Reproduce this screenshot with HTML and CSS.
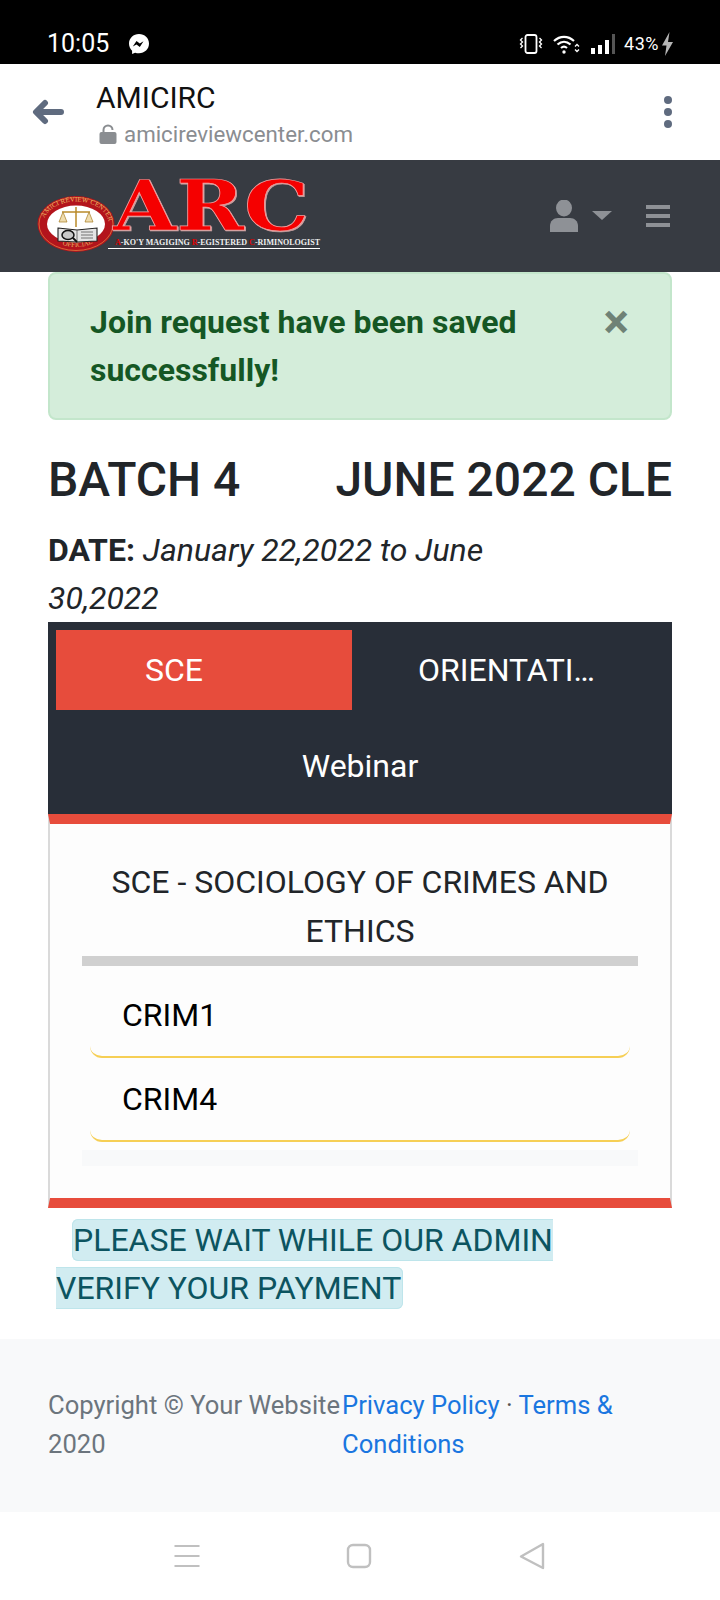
FILE: index.html
```html
<!DOCTYPE html>
<html lang="en">
<head>
  <meta charset="UTF-8" />
  <meta name="viewport" content="width=device-width, initial-scale=1" />
  <title>AMICIRC</title>
  <link rel="stylesheet" href="styles.css">
</head>
<body>
  <div class="status-bar">
    <div class="status-left">
      <span class="status-time">10:05</span>
      <svg class="status-messenger" viewBox="0 0 20 20" width="20" height="20">
        <path fill="#fff" d="M10 0C4.400 0 0 4.100 0 9.600c0 2.900 1.200 5.400 3.100 7.100V20l3-1.300c1.200.4 2.500.6 3.900.6 5.600 0 10-4.100 10-9.700S15.600 0 10 0z"/>
        <path fill="#000" d="M3.800 12.500l3.700-5.500 3.300 2.500 3.700-2.200-3.700 5.600-3.300-2.500z"/>
      </svg>
    </div>
    <div class="status-right">
      <svg viewBox="0 0 24 20" width="24" height="20" fill="none" stroke="#fff" stroke-width="1.800">
        <rect x="6.500" y="1" width="11" height="18" rx="2"/>
        <path d="M3.500 4l-2 2 2 2-2 2 2 2-2 2M20.500 4l2 2-2 2 2 2-2 2 2 2" stroke-width="1.300"/>
      </svg>
      <svg viewBox="0 0 27 20" width="27" height="20" fill="none" stroke="#fff" stroke-width="2.200">
        <path d="M1 7c6-5.500 14-5.500 20 0M4.500 10.500c4-3.500 9-3.500 13 0M8 14c2-1.700 4-1.700 6 0"/>
        <circle cx="11" cy="18" r="1.700" fill="#fff" stroke="none"/>
        <path d="M22 12.500l2-2 2 2M22 15.500l2 2 2-2" stroke-width="1.300"/>
      </svg>
      <svg viewBox="0 0 26 20" width="26" height="20">
        <rect x="1" y="14" width="4" height="6" fill="#fff"/>
        <rect x="8" y="11" width="4" height="9" fill="#fff"/>
        <rect x="15" y="6" width="4" height="14" fill="#fff"/>
        <rect x="22" y="0" width="3" height="20" fill="#555"/>
      </svg>
      <span class="status-battery">43%</span>
      <svg viewBox="0 0 13 24" width="13" height="24">
        <path fill="#b5b5b5" d="M8.500 0L1 13.500h4.500L4 24l8-14H7z"/>
      </svg>
    </div>
  </div>

  <div class="browser-bar">
    <svg class="browser-back" viewBox="0 0 32 26" width="32" height="26">
      <path fill="none" stroke="#5f6b7f" stroke-width="6" stroke-linecap="round" stroke-linejoin="round" d="M29 13H5M13 4l-9 9 9 9"/>
    </svg>
    <div class="browser-title">
      <div class="browser-name">AMICIRC</div>
      <div class="browser-url">
        <svg viewBox="0 0 18 20" width="18" height="20">
          <path fill="none" stroke="#8a8d91" stroke-width="2" d="M4.500 9V6a4.500 4.500 0 0 1 9 0"/>
          <rect x="0.500" y="8" width="17" height="12" rx="2" fill="#8a8d91"/>
        </svg>
        <span>amicireviewcenter.com</span>
      </div>
    </div>
    <div class="browser-menu"><i></i><i></i><i></i></div>
  </div>

  <nav class="navbar">
    <svg class="logo" viewBox="0 0 290 88" width="290" height="88">
      <defs>
        <path id="sealTop" d="M7 53a33 23.500 0 0 1 66 0"/>
        <path id="sealBottom" d="M14 64a30 22 0 0 0 52 0"/>
      </defs>
      <ellipse cx="40" cy="52" rx="38.500" ry="28" fill="#b3141c"/>
      <ellipse cx="40" cy="52" rx="37" ry="26.500" fill="none" stroke="#e07a40" stroke-width="0.800"/>
      <text class="seal-text"><textPath href="#sealTop" startOffset="8%">AMICI REVIEW CENTER</textPath></text>
      <text class="seal-text"><textPath href="#sealBottom" startOffset="26%">OFFICIAL</textPath></text>
      <ellipse cx="40" cy="52" rx="29" ry="18.500" fill="#fff"/>
      <path d="M40 35v20M26 40h28" stroke="#b98a2a" stroke-width="1.500" fill="none"/>
      <path d="M23 50l4-10 4 10zM49 50l4-10 4 10z" fill="#efdcae" stroke="#a67c22" stroke-width="0.700"/>
      <path d="M22 56l19 2 20-2v13l-20 1-19-1z" fill="#e4e4e4" stroke="#222" stroke-width="1.100"/>
      <path d="M41 58v12M45 60h12M45 63h12M45 66h12" stroke="#555" stroke-width="0.800" fill="none"/>
      <ellipse cx="32" cy="63" rx="6" ry="4.500" fill="#c8c8c8" stroke="#111" stroke-width="1.500"/>
      <path d="M37 66l4 4" stroke="#111" stroke-width="1.800"/>
      <text class="logo-arc" x="77" y="58" textLength="196" lengthAdjust="spacingAndGlyphs">ARC</text>
      <text class="logo-sub" x="79" y="73" textLength="205" lengthAdjust="spacingAndGlyphs"><tspan fill="#e00000">A</tspan>-KO'Y MAGIGING <tspan fill="#e00000">R</tspan>-EGISTERED <tspan fill="#e00000">C</tspan>-RIMINOLOGIST</text>
      <rect x="72" y="76" width="212" height="1" fill="#fff"/>
    </svg>
    <div class="nav-actions">
      <svg viewBox="0 0 28 32" width="28" height="32">
        <ellipse cx="14" cy="8" rx="8" ry="8.500" fill="#8e9196"/>
        <path fill="#8e9196" d="M0 32v-6c0-5 3.500-8 8-8h12c4.500 0 8 3 8 8v6z"/>
      </svg>
      <span class="nav-caret"></span>
      <div class="nav-toggler"><i></i><i></i><i></i></div>
    </div>
  </nav>

  <main class="content">
    <div class="alert-success">
      <span>Join request have been saved successfully!</span>
      <span class="alert-close">×</span>
    </div>

    <div class="batch-head">
      <h1>BATCH 4</h1>
      <h1>JUNE 2022 CLE</h1>
    </div>
    <p class="batch-date"><b>DATE:</b> <em>January 22,2022 to June 30,2022</em></p>

    <div class="tabs">
      <a class="tab tab-active">SCE</a>
      <a class="tab tab-second">ORIENTATION</a>
      <a class="tab tab-wide">Webinar</a>
    </div>

    <div class="panel">
      <div class="panel-title">SCE - SOCIOLOGY OF CRIMES AND ETHICS</div>
      <div class="panel-rule"></div>
      <div class="subject-list">
        <div class="subject">CRIM1</div>
        <div class="subject">CRIM4</div>
      </div>
      <div class="panel-foot"></div>
    </div>

    <p class="notice"><span>PLEASE WAIT WHILE OUR ADMIN VERIFY YOUR PAYMENT</span></p>
  </main>

  <footer class="footer">
    <div class="footer-copy">Copyright © Your Website 2020</div>
    <div class="footer-links"><a>Privacy Policy</a> · <a>Terms &amp; Conditions</a></div>
  </footer>

  <div class="system-nav">
    <svg viewBox="0 0 26 24" width="26" height="24" fill="none" stroke="#c0c0c0" stroke-width="2">
      <path d="M0.500 2h25M0.500 12h25M0.500 22h25"/>
    </svg>
    <svg viewBox="0 0 26 26" width="26" height="26" fill="none" stroke="#c0c0c0" stroke-width="2.400">
      <rect x="2" y="2" width="22" height="22" rx="5"/>
    </svg>
    <svg viewBox="0 0 28 28" width="28" height="28" fill="none" stroke="#c0c0c0" stroke-width="2.400" stroke-linejoin="round">
      <path d="M25 2v24L3 14.500z"/>
    </svg>
  </div>
</body>
</html>
```

FILE: styles.css
```css
body {
  margin: 0;
  font-family: 'Roboto', sans-serif;
  font-size: 32px;
  line-height: 1.5;
  color: #212529;
  background: #fff;
}

/* phone status bar */
.status-bar {
  height: 64px;
  background: #000;
  color: #fff;
  display: flex;
  justify-content: space-between;
  padding: 24px 46px 0 47px;
  box-sizing: border-box;
}

.status-left,
.status-right {
  display: flex;
  align-items: center;
  height: 40px;
}

.status-time {
  font-size: 25px;
  line-height: 40px;
}

.status-messenger {
  margin-left: 20px;
}

.status-right {
  gap: 10px;
}

.status-battery {
  font-size: 18px;
  line-height: 40px;
  letter-spacing: 0.5px;
  margin-left: -2px;
}

.status-right svg:last-child {
  margin-left: -8px;
}

/* browser bar */
.browser-bar {
  height: 96px;
  display: flex;
  align-items: center;
  padding: 0 48px 0 32px;
}

.browser-back {
  margin-right: 32px;
}

.browser-title {
  flex: 1;
  padding-top: 6px;
}

.browser-name {
  font-size: 30px;
  line-height: 36px;
  color: #111;
  margin-bottom: 1px;
}

.browser-url {
  display: flex;
  align-items: center;
  gap: 7px;
  margin-left: 3px;
  font-size: 22.3px;
  line-height: 34px;
  color: #8a8d91;
}

.browser-menu {
  display: flex;
  flex-direction: column;
  gap: 4px;
}

.browser-menu i {
  width: 8px;
  height: 8px;
  border-radius: 50%;
  background: #5f6b7f;
}

/* site navbar */
.navbar {
  height: 112px;
  background: #373b42;
  display: flex;
  justify-content: space-between;
  align-items: center;
  padding: 0 50px 0 36px;
}

.logo-arc {
  font-family: 'DejaVu Serif', serif;
  font-weight: 700;
  font-size: 69px;
  fill: #f50000;
  stroke: #f3a0a0;
  stroke-width: 0.7;
  filter: drop-shadow(1.5px 1px 0 #c9a0a0);
}

.logo-sub {
  font-family: 'Liberation Serif', serif;
  font-weight: 700;
  font-size: 8px;
  fill: #eee;
}

.seal-text {
  font-family: 'Liberation Serif', serif;
  font-size: 7px;
  fill: #e8b060;
}

.nav-actions {
  display: flex;
  align-items: center;
}

.nav-caret {
  width: 0;
  height: 0;
  margin: 0 34px 0 14px;
  border-left: 10px solid transparent;
  border-right: 10px solid transparent;
  border-top: 9px solid #8e9196;
  position: relative;
  top: -1px;
}

.nav-toggler {
  display: flex;
  flex-direction: column;
  gap: 5px;
}

.nav-toggler i {
  width: 24px;
  height: 4px;
  background: #8e9196;
}

/* page content */
.content {
  padding: 0 48px;
}

.alert-success {
  display: flex;
  justify-content: space-between;
  padding: 24px 40px;
  background: #d4edda;
  border: 2px solid #c3e6cb;
  border-radius: 8px;
  color: #155724;
  font-weight: 700;
  line-height: 48px;
}

.alert-success span:first-child {
  width: 450px;
}

.alert-close {
  font-size: 48px;
  color: #6f8276;
  margin-right: 1px;
}

.batch-head {
  display: flex;
  justify-content: space-between;
  margin: 31px 0 17px;
}

.batch-head h1 {
  margin: 0;
  font-size: 48px;
  font-weight: 500;
  line-height: 58px;
}

.batch-date {
  margin: 0;
  width: 480px;
  line-height: 48px;
}

.tabs {
  background: #282e38;
  padding: 8px;
  display: grid;
  grid-template-columns: 296px 312px;
  row-gap: 16px;
}

.tab {
  height: 80px;
  line-height: 80px;
  color: #fff;
  text-align: center;
  box-sizing: border-box;
}

.tab-active {
  background: #e74c3c;
  padding-right: 60px;
}

.tab-second {
  padding: 0 66px 0 66px;
  overflow: hidden;
  white-space: nowrap;
  text-overflow: ellipsis;
  text-align: left;
}

.tab-wide {
  grid-column: 1 / -1;
}

.panel {
  background: #fdfdfd;
  border-top: 10px solid #e74c3c;
  border-bottom: 10px solid #e74c3c;
  border-left: 2px solid #dadada;
  border-right: 2px solid #dadada;
  padding: 34px 32px 32px;
}

.panel-title {
  text-align: center;
  line-height: 49px;
  padding: 0 16px;
}

.panel-rule {
  height: 10px;
  background: #d0d0d0;
}

.subject-list {
  padding: 8px 8px;
}

.subject {
  padding: 17px 32px;
  line-height: 48px;
  color: #000;
  border-bottom: 2px solid #f6cf55;
  border-radius: 0 0 12px 12px;
}

.panel-foot {
  height: 16px;
  background: #f8f9fa;
}

.notice {
  margin: 8px 0 27px;
  padding: 0 8px;
  line-height: 48px;
  text-indent: 16px;
}

.notice span {
  background: #d1ecf1;
  border: 1px solid #bee5eb;
  border-radius: 6px;
  padding: 1px 1px 1px 0;
  color: #0c5460;
}

.footer {
  height: 173px;
  box-sizing: border-box;
  background: #f8f9fa;
  padding: 47px 48px 0;
  display: flex;
  font-size: 25.6px;
  line-height: 39px;
}

.footer-copy {
  width: 294px;
  flex: none;
  color: #6c757d;
}

.footer-links {
  color: #555;
}

.footer-links a {
  color: #1a76e0;
}

/* android nav buttons */
.system-nav {
  height: 88px;
  display: grid;
  grid-template-columns: 26px 26px 28px;
  column-gap: 146px;
  justify-content: center;
  align-items: center;
}
```
